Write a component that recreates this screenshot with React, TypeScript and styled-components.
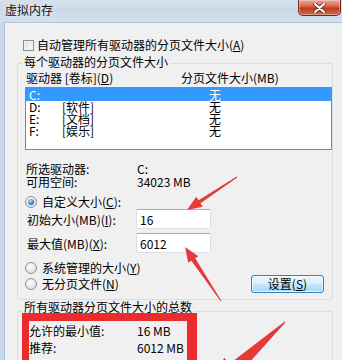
import React from "react";
import styled, { createGlobalStyle, css } from "styled-components";

const Global = createGlobalStyle`
  html, body { margin: 0; padding: 0; background: #f0f0f0; }
  body {
    font-family: "Noto Sans CJK SC", "Noto Sans", sans-serif;
    font-size: 12px;
    color: #000;
  }
  * { box-sizing: border-box; }
`;

const Window = styled.div`
  position: relative;
  width: 342px;
  height: 360px;
  overflow: hidden;
  display: flex;
  flex-direction: column;
  background: #cbdaea;
`;

const TitleBar = styled.div`
  flex: none;
  height: 22px;
  display: flex;
  align-items: flex-start;
  justify-content: space-between;
  padding-left: 5px;
  padding-right: 1px;
  background: linear-gradient(180deg, #d6e1ec 0%, #cbd9e8 45%, #d3e0ee 100%);
`;

const Title = styled.span`
  font-size: 12px;
  line-height: 20px;
  color: #111;
  text-shadow: 0 0 5px rgba(255, 255, 255, 0.9);
`;

const CloseButton = styled.div`
  width: 43px;
  height: 16px;
  border: 1px solid #6b2a22;
  border-top: none;
  border-radius: 0 0 5px 5px;
  background: linear-gradient(180deg, #e9a594 0%, #d96a55 40%, #c2391f 55%, #cf6a4f 100%);
  box-shadow: inset 0 0 0 1px rgba(255, 255, 255, 0.35);
  display: flex;
  align-items: center;
  justify-content: center;
`;

const Frame = styled.div`
  flex: 1;
  display: flex;
  padding-left: 4px;
`;

const Client = styled.div`
  flex: 1;
  display: flex;
  flex-direction: column;
  background: #f0f0f0;
  border-top: 1px solid #b3c4d6;
  border-left: 1px solid #b3c4d6;
  padding: 15px 9px 0 12px;
`;

const CheckRow = styled.div`
  display: flex;
  align-items: center;
  gap: 3px;
  height: 14px;
  line-height: 14px;
  padding-left: 6px;
  white-space: nowrap;
`;

const CheckBox = styled.span`
  flex: none;
  width: 11px;
  height: 11px;
  border: 1px solid #8e8f8f;
  background: linear-gradient(135deg, #d8d8d8 0%, #f6f6f6 70%, #ffffff 100%);
  box-shadow: inset 0 0 0 1px #f2f2f2;
`;

const Group = styled.fieldset<{ $top: number; $bottom: number }>`
  margin: ${(p) => p.$top}px 0 0;
  padding: 0 0 ${(p) => p.$bottom}px 7px;
  border: 1px solid #d5dfe5;
  border-radius: 3px;
  min-width: 0;
  display: flex;
  flex-direction: column;
`;

const Legend = styled.legend<{ $drop: number }>`
  margin-left: -3px;
  padding: 0 2px ${(p) => p.$drop}px;
  font-size: 12px;
  line-height: 14px;
  white-space: nowrap;
`;

const HeaderRow = styled.div`
  display: flex;
  line-height: 14px;
  padding-left: 1px;
  white-space: nowrap;
`;

const Cell = styled.span<{ $w?: number }>`
  flex: none;
  ${(p) => p.$w !== undefined && css`width: ${p.$w}px;`}
  white-space: nowrap;
`;

const List = styled.div`
  margin-top: 2px;
  height: 63px;
  border: 1px solid #828790;
  background: #fff;
`;

const ListRow = styled.div<{ $sel?: boolean }>`
  display: flex;
  height: 12px;
  line-height: 12px;
  padding-left: 3px;
  background: ${(p) => (p.$sel ? "#3399ff" : "transparent")};
  color: ${(p) => (p.$sel ? "#fff" : "#000")};
  &:first-child { height: 13px; line-height: 13px; }
`;

const InfoRow = styled.div<{ $top?: number }>`
  display: flex;
  margin-top: ${(p) => p.$top ?? 0}px;
  height: 13px;
  line-height: 13px;
  padding-left: 1px;
  white-space: nowrap;
`;

const RadioRow = styled.div<{ $top?: number }>`
  display: flex;
  align-items: center;
  gap: 5px;
  margin-top: ${(p) => p.$top ?? 0}px;
  height: 14px;
  line-height: 14px;
  white-space: nowrap;
`;

const Radio = styled.span<{ $on?: boolean }>`
  flex: none;
  position: relative;
  width: 12px;
  height: 12px;
  border-radius: 50%;
  border: 1px solid #929292;
  background: radial-gradient(circle at 40% 35%, #ffffff 0%, #e6e6e6 60%, #d2d2d2 100%);
  ${(p) =>
    p.$on &&
    css`
      &::after {
        content: "";
        position: absolute;
        inset: 2px;
        border-radius: 50%;
        background: radial-gradient(circle at 40% 35%, #b6e6ff 0%, #2b83d2 55%, #0d4e8e 100%);
      }
    `}
`;

const InputRow = styled.div<{ $top?: number }>`
  display: flex;
  align-items: center;
  margin-top: ${(p) => p.$top ?? 0}px;
  height: 20px;
  padding-left: 2px;
  white-space: nowrap;
`;

const TextBox = styled.input`
  flex: none;
  width: 75px;
  height: 20px;
  margin: 0;
  padding: 0 0 0 3px;
  border: 1px solid #dbe0e6;
  border-top-color: #abadb3;
  border-radius: 2px;
  background: #fff;
  font-family: "Noto Sans CJK SC", "Noto Sans", sans-serif;
  font-size: 12px;
  color: #000;
  outline: none;
`;

const LastRow = styled.div`
  display: flex;
  align-items: center;
  justify-content: space-between;
  height: 18px;
  padding-right: 8px;
`;

const Button = styled.div`
  width: 73px;
  height: 18px;
  border: 1px solid #3c7fb1;
  border-radius: 3px;
  background: linear-gradient(180deg, #eaf6fd 0%, #d9f0fc 48%, #bee6fd 52%, #a7d9f5 100%);
  box-shadow: inset 0 0 0 1px rgba(255, 255, 255, 0.7);
  display: flex;
  align-items: center;
  justify-content: center;
  font-size: 12px;
  line-height: 16px;
`;

const SumRow = styled.div`
  display: flex;
  height: 17px;
  line-height: 17px;
  padding-left: 4px;
  white-space: nowrap;
`;

const RedBox = styled.div`
  position: absolute;
  left: 22px;
  top: 313px;
  width: 175px;
  height: 80px;
  border-style: solid;
  border-color: #ec2b2f;
  border-width: 8px 10px 8px 7px;
  pointer-events: none;
`;

const Overlay = styled.svg`
  position: absolute;
  left: 0;
  top: 0;
  pointer-events: none;
`;

function arrow(
  tx: number,
  ty: number,
  hx: number,
  hy: number,
  headLen: number,
  headW: number,
  w0: number,
  w1: number
) {
  const dx = hx - tx;
  const dy = hy - ty;
  const L = Math.hypot(dx, dy);
  const ux = dx / L;
  const uy = dy / L;
  const nx = -uy;
  const ny = ux;
  const bx = hx - ux * headLen;
  const by = hy - uy * headLen;
  const pts = [
    [tx + (nx * w0) / 2, ty + (ny * w0) / 2],
    [bx + (nx * w1) / 2, by + (ny * w1) / 2],
    [bx + (nx * headW) / 2, by + (ny * headW) / 2],
    [hx, hy],
    [bx - (nx * headW) / 2, by - (ny * headW) / 2],
    [bx - (nx * w1) / 2, by - (ny * w1) / 2],
    [tx - (nx * w0) / 2, ty - (ny * w0) / 2],
  ];
  return pts.map((p) => p.map((v) => v.toFixed(1)).join(",")).join(" ");
}

const U = styled.u`
  text-decoration: underline;
`;

const drives = [
  { d: "C:", label: "", size: "无", sel: true },
  { d: "D:", label: "[软件]", size: "无" },
  { d: "E:", label: "[文档]", size: "无" },
  { d: "F:", label: "[娱乐]", size: "无" },
];

export default function App() {
  return (
    <>
      <Global />
      <Window>
        <TitleBar>
          <Title>虚拟内存</Title>
          <CloseButton>
            <svg width="13" height="10" viewBox="0 0 13 10">
              <path
                d="M2 1 L11 9 M11 1 L2 9"
                stroke="#5a1e16"
                strokeWidth="3.6"
                strokeLinecap="round"
              />
              <path
                d="M2 1 L11 9 M11 1 L2 9"
                stroke="#ffffff"
                strokeWidth="2.2"
                strokeLinecap="round"
              />
            </svg>
          </CloseButton>
        </TitleBar>
        <Frame>
          <Client>
            <CheckRow>
              <CheckBox />
              <span>
                自动管理所有驱动器的分页文件大小(<U>A</U>)
              </span>
            </CheckRow>

            <Group $top={3} $bottom={6}>
              <Legend $drop={2}>每个驱动器的分页文件大小</Legend>
              <HeaderRow>
                <Cell $w={155}>
                  驱动器 [卷标](<U>D</U>)
                </Cell>
                <Cell>分页文件大小(MB)</Cell>
              </HeaderRow>
              <List>
                {drives.map((r) => (
                  <ListRow key={r.d} $sel={r.sel}>
                    <Cell $w={33}>{r.d}</Cell>
                    <Cell $w={147}>{r.label}</Cell>
                    <Cell>{r.size}</Cell>
                  </ListRow>
                ))}
              </List>
              <InfoRow $top={12}>
                <Cell $w={111}>所选驱动器:</Cell>
                <Cell>C:</Cell>
              </InfoRow>
              <InfoRow>
                <Cell $w={111}>可用空间:</Cell>
                <Cell>34023 MB</Cell>
              </InfoRow>
              <RadioRow $top={7}>
                <Radio $on />
                <span>
                  自定义大小(<U>C</U>):
                </span>
              </RadioRow>
              <InputRow>
                <Cell $w={109}>
                  初始大小(MB)(<U>I</U>):
                </Cell>
                <TextBox readOnly value="16" />
              </InputRow>
              <InputRow $top={4}>
                <Cell $w={109}>
                  最大值(MB)(<U>X</U>):
                </Cell>
                <TextBox readOnly value="6012" />
              </InputRow>
              <RadioRow $top={8}>
                <Radio />
                <span>
                  系统管理的大小(<U>Y</U>)
                </span>
              </RadioRow>
              <LastRow>
                <RadioRow>
                  <Radio />
                  <span>
                    无分页文件(<U>N</U>)
                  </span>
                </RadioRow>
                <Button>
                  <span>
                    设置(<U>S</U>)
                  </span>
                </Button>
              </LastRow>
            </Group>

            <Group $top={0} $bottom={10}>
              <Legend $drop={8}>所有驱动器分页文件大小的总数</Legend>
              <SumRow>
                <Cell $w={108}>允许的最小值:</Cell>
                <Cell>16 MB</Cell>
              </SumRow>
              <SumRow>
                <Cell $w={108}>推荐:</Cell>
                <Cell>6012 MB</Cell>
              </SumRow>
            </Group>
          </Client>
        </Frame>

        <RedBox />
        <Overlay width="342" height="360" viewBox="0 0 342 360">
          <polygon points={arrow(237, 177, 187, 210, 15, 12, 1, 3.5)} fill="#e63a3a" />
          <polygon points={arrow(221, 301, 185, 247, 15, 12, 1, 4.5)} fill="#e63a3a" />
          <polygon points={arrow(285, 322, 205, 396, 40, 30, 1, 14)} fill="#e63a3a" />
        </Overlay>
      </Window>
    </>
  );
}
